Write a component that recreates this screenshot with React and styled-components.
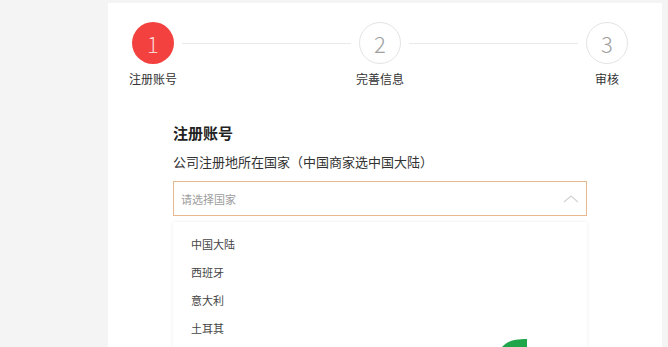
import React from 'react';
import styled, { createGlobalStyle } from 'styled-components';

const Global = createGlobalStyle`
  body {
    margin: 0;
    background: #f4f4f4;
    font-family: "Noto Sans CJK SC", "Noto Sans", sans-serif;
    color: #333;
  }
`;

const Page = styled.div`
  display: flex;
  height: 347px;
  overflow: hidden;
  position: relative;
`;

const Panel = styled.div`
  margin: 3px 0 0 108px;
  width: 554px;
  background: #fff;
  padding: 19px 34px 0 24px;
  box-sizing: border-box;
`;

const Steps = styled.div`
  display: flex;
  align-items: flex-start;
`;

const Step = styled.div`
  display: flex;
  flex-direction: column;
  align-items: center;
  width: 42px;
`;

const Circle = styled.div`
  width: 42px;
  height: 42px;
  border-radius: 50%;
  box-sizing: border-box;
  display: flex;
  align-items: center;
  justify-content: center;
  font-family: "Noto Sans CJK SC", "Noto Sans", sans-serif;
  font-size: 22px;
  font-weight: 300;
  background: ${p => (p.$active ? '#f2413f' : '#fff')};
  color: ${p => (p.$active ? '#fbd3d2' : '#a0a0a0')};
  border: ${p => (p.$active ? 'none' : '1px solid #e4e4e4')};
`;

const StepLabel = styled.div`
  margin-top: 6px;
  font-size: 12px;
  white-space: nowrap;
  color: #333;
`;

const Line = styled.div`
  flex: 1;
  height: 1px;
  background: #e9e9e9;
  margin: 21px 8px 0;
`;

const Form = styled.div`
  margin: 35px 0 0 41px;
  width: 414px;
  position: relative;
`;

const Title = styled.div`
  font-size: 15px;
  font-weight: 700;
  color: #222;
  line-height: 22px;
`;

const Label = styled.div`
  margin-top: 8px;
  font-size: 13px;
  line-height: 20px;
  color: #333;
`;

const Select = styled.div`
  margin-top: 9px;
  height: 35px;
  box-sizing: border-box;
  border: 1px solid #e8b98e;
  display: flex;
  align-items: center;
  justify-content: space-between;
  padding: 0 7px 0 7px;
`;

const Placeholder = styled.span`
  font-size: 11px;
  color: #9d9d9d;
`;

const Menu = styled.div`
  margin-top: 6px;
  background: #fff;
  box-shadow: 0 0 3px rgba(0, 0, 0, 0.08);
  padding-top: 8px;
  height: 140px;
`;

const Item = styled.div`
  height: 28px;
  line-height: 28px;
  padding-left: 18px;
  font-size: 11px;
  color: #444;
`;

const Blob = styled.svg`
  position: absolute;
  left: 501px;
  top: 337px;
`;

const steps = ['注册账号', '完善信息', '审核'];
const countries = ['中国大陆', '西班牙', '意大利', '土耳其'];

export default function App() {
  return (
    <Page>
      <Global />
      <Panel>
        <Steps>
          {steps.map((s, i) => (
            <React.Fragment key={s}>
              {i > 0 && <Line />}
              <Step>
                <Circle $active={i === 0}>{i + 1}</Circle>
                <StepLabel>{s}</StepLabel>
              </Step>
            </React.Fragment>
          ))}
        </Steps>
        <Form>
          <Title>注册账号</Title>
          <Label>公司注册地所在国家（中国商家选中国大陆）</Label>
          <Select>
            <Placeholder>请选择国家</Placeholder>
            <svg width="16" height="10" viewBox="0 0 16 10">
              <path d="M1 8 L8 2 L15 8" fill="none" stroke="#d4d4d4" strokeWidth="1.3" />
            </svg>
          </Select>
          <Menu>
            {countries.map(c => (
              <Item key={c}>{c}</Item>
            ))}
          </Menu>
        </Form>
      </Panel>
      <Blob width="28" height="10" viewBox="0 0 28 10">
        <path d="M1 10 C5 5 12 2 26 2 L26 10 Z" fill="#1fa64a" />
      </Blob>
    </Page>
  );
}
